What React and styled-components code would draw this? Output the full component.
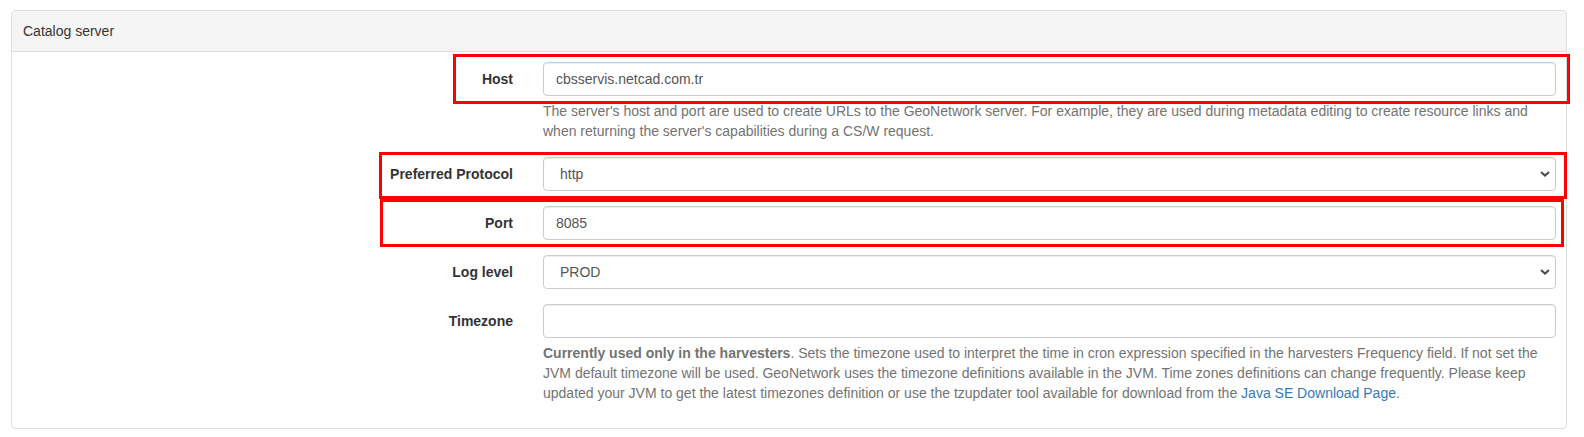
import React from "react";
import styled, { createGlobalStyle } from "styled-components";

const GlobalStyle = createGlobalStyle`
  html, body { margin: 0; padding: 0; background: #fff; overflow: hidden; }
  body {
    font-family: "Liberation Sans", Arial, sans-serif;
    font-size: 14px;
    line-height: 20px;
    color: #333;
  }
  * { box-sizing: border-box; }
`;

const Page = styled.div`
  position: relative;
  padding: 10px 17px 10px 11px;
`;

const Panel = styled.section`
  border: 1px solid #ddd;
  border-radius: 4px;
  background: #fff;
`;

const PanelHeading = styled.div`
  background: #f5f5f5;
  border-bottom: 1px solid #ddd;
  border-radius: 3px 3px 0 0;
  padding: 10px 11px;
  color: #333;
`;

const PanelBody = styled.div`
  padding: 10px 10px 10px 0;
  display: flex;
  flex-direction: column;
  gap: 15px;
`;

const FormGroup = styled.div`
  display: grid;
  grid-template-columns: 501px 1fr;
  column-gap: 30px;
`;

const Label = styled.label`
  font-weight: bold;
  text-align: right;
  padding-top: 7px;
  color: #333;
`;

const Field = styled.div`
  display: flex;
  flex-direction: column;
  min-width: 0;
`;

const Input = styled.input`
  height: 34px;
  width: 100%;
  padding: 6px 12px;
  font: inherit;
  color: #555;
  background: #fff;
  border: 1px solid #ccc;
  border-radius: 4px;
  box-shadow: inset 0 1px 1px rgba(0, 0, 0, 0.075);
  outline: none;
`;

const chevron = encodeURIComponent(
  `<svg xmlns="http://www.w3.org/2000/svg" width="10" height="6" viewBox="0 0 10 6"><path d="M1 1 L5 4.6 L9 1" fill="none" stroke="#4a4a4a" stroke-width="2"/></svg>`
);

const Select = styled.select`
  height: 34px;
  width: 100%;
  padding: 6px 24px 6px 16px;
  font: inherit;
  color: #555;
  border: 1px solid #ccc;
  border-radius: 4px;
  box-shadow: inset 0 1px 1px rgba(0, 0, 0, 0.075);
  appearance: none;
  -webkit-appearance: none;
  background: #fff url("data:image/svg+xml,${chevron}") no-repeat right 5px center;
  outline: none;
`;

const Help = styled.p`
  margin: 5px 0 ${(p) => (p.$last ? "15px" : "1px")};
  color: #737373;
`;

const Link = styled.a`
  color: #337ab7;
  text-decoration: none;
`;

const Mark = styled.div`
  position: absolute;
  border: 3px solid #ff0000;
  pointer-events: none;
`;

const marks = [
  { left: 453, top: 54, width: 1117, height: 50 },
  { left: 379, top: 152, width: 1188, height: 47 },
  { left: 380, top: 199, width: 1184, height: 48 },
];

export default function App() {
  return (
    <>
      <GlobalStyle />
      <Page>
        <Panel>
          <PanelHeading>Catalog server</PanelHeading>
          <PanelBody>
            <FormGroup>
              <Label>Host</Label>
              <Field>
                <Input defaultValue="cbsservis.netcad.com.tr" />
                <Help>
                  The server's host and port are used to create URLs to the GeoNetwork server. For example, they are used during metadata editing to create resource links and when returning the server's capabilities during a CS/W request.
                </Help>
              </Field>
            </FormGroup>
            <FormGroup>
              <Label>Preferred Protocol</Label>
              <Field>
                <Select defaultValue="http">
                  <option value="http">http</option>
                  <option value="https">https</option>
                </Select>
              </Field>
            </FormGroup>
            <FormGroup>
              <Label>Port</Label>
              <Field>
                <Input defaultValue="8085" />
              </Field>
            </FormGroup>
            <FormGroup>
              <Label>Log level</Label>
              <Field>
                <Select defaultValue="PROD">
                  <option value="PROD">PROD</option>
                  <option value="DEV">DEV</option>
                </Select>
              </Field>
            </FormGroup>
            <FormGroup>
              <Label>Timezone</Label>
              <Field>
                <Input defaultValue="" />
                <Help $last>
                  <b>Currently used only in the harvesters</b>. Sets the timezone used to interpret the time in cron expression specified in the harvesters Frequency field. If not set the JVM default timezone will be used. GeoNetwork uses the timezone definitions available in the JVM. Time zones definitions can change frequently. Please keep updated your JVM to get the latest timezones definition or use the tzupdater tool available for download from the{" "}
                  <Link href="#">Java SE Download Page</Link>.
                </Help>
              </Field>
            </FormGroup>
          </PanelBody>
        </Panel>
        {marks.map((m, i) => (
          <Mark key={i} style={{ left: m.left, top: m.top, width: m.width, height: m.height }} />
        ))}
      </Page>
    </>
  );
}
